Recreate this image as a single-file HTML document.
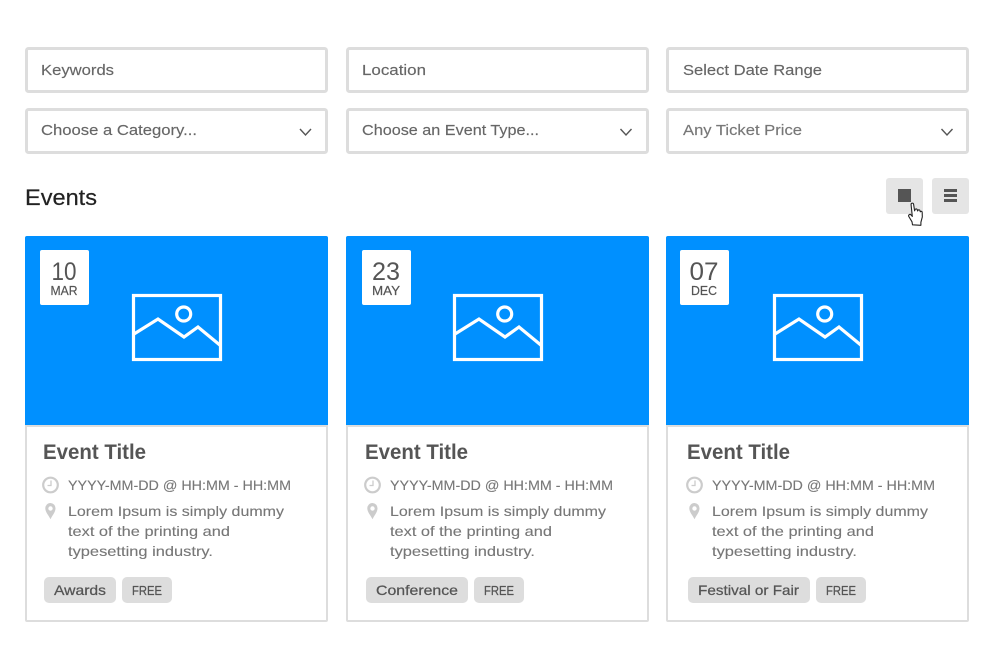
<!DOCTYPE html>
<html lang="en">
<head>
<meta charset="utf-8">
<title>Events</title>
<style>
html,body{margin:0;padding:0;background:#fff;width:1000px;height:667px;overflow:hidden}
svg{display:block}
text{font-family:"Liberation Sans",sans-serif}
.f{font-size:15px;fill:#666;stroke:#666;stroke-width:.15}
.t{font-size:21px;font-weight:700;fill:#555}
.d{font-size:14px;fill:#777;stroke:#777;stroke-width:.12}
.g{font-size:14px;fill:#555;stroke:#555;stroke-width:.25}
.r{font-size:13px;fill:#555;stroke:#555;stroke-width:.25}
.i{fill:#fff;stroke:#ddd;stroke-width:3}
.c{fill:none;stroke:#555;stroke-width:1.400}
.w{fill:none;stroke:#fff;stroke-width:3.200}
</style>
</head>
<body>
<svg width="1000" height="667" viewBox="0 0 1000 667" xmlns="http://www.w3.org/2000/svg">
<rect width="1000" height="667" fill="#fff"/>

<rect class="i" x="26.500" y="48.500" width="300" height="43" rx="2"/>
<rect class="i" x="347.500" y="48.500" width="300" height="43" rx="2"/>
<rect class="i" x="667.500" y="48.500" width="300" height="43" rx="2"/>
<rect class="i" x="26.500" y="109.500" width="300" height="43" rx="2"/>
<rect class="i" x="347.500" y="109.500" width="300" height="43" rx="2"/>
<rect class="i" x="667.500" y="109.500" width="300" height="43" rx="2"/>

<text class="f" x="41" y="75" textLength="73" lengthAdjust="spacingAndGlyphs">Keywords</text>
<text class="f" x="362" y="75" textLength="64" lengthAdjust="spacingAndGlyphs">Location</text>
<text class="f" x="683" y="75" textLength="139" lengthAdjust="spacingAndGlyphs">Select Date Range</text>
<text class="f" x="41" y="135" textLength="156" lengthAdjust="spacingAndGlyphs">Choose a Category...</text>
<text class="f" x="362" y="135" textLength="177" lengthAdjust="spacingAndGlyphs">Choose an Event Type...</text>
<text class="f" x="683" y="135" textLength="119" lengthAdjust="spacingAndGlyphs" style="fill:#777;stroke:#777">Any Ticket Price</text>

<path class="c" d="M300 129l5.500 6 5.500-6"/>
<path class="c" d="M620.500 129l5.500 6 5.500-6"/>
<path class="c" d="M941.500 129l5.500 6 5.500-6"/>

<text x="25" y="205" font-size="22" fill="#222" stroke="#222" stroke-width=".2" textLength="72" lengthAdjust="spacingAndGlyphs">Events</text>

<rect x="886" y="178" width="37" height="36" rx="3" fill="#e5e5e5"/>
<rect x="932" y="178" width="37" height="36" rx="3" fill="#e5e5e5"/>
<rect x="898" y="189" width="13" height="13" fill="#555"/>
<path d="M944 189h13v3h-13zM944 194h13v3h-13zM944 199h13v3h-13z" fill="#555"/>
<path d="M912.500 224.800l-.5-3-3.200-5.300c-.8-1.600 1.100-2.800 2.200-1.600l1.300 1.500-1.200-11.700c-.2-1.800 2.100-2.200 2.500-.4l1 6.500.4-1c.3-1.300 2.200-1.100 2.300.2l.3 1 .3-.5c.4-1.100 2-.9 2.100.3l.3 1c.4-.9 1.900-.6 1.900.6l.1 4.600-1.400 5.300v3z" fill="#fff" stroke="#222" stroke-width="1.100" stroke-linejoin="round"/>

<!-- Card 1 -->
<rect x="26" y="237" width="301" height="384" rx="1" fill="#fff" stroke="#ddd" stroke-width="2"/>
<path d="M25 425V238a2 2 0 0 1 2-2h299a2 2 0 0 1 2 2v187z" fill="#0090ff"/>
<rect x="25" y="425" width="303" height="2" fill="#ddd"/>
<rect x="40" y="250" width="49" height="55" rx="2" fill="#fff"/>
<text x="64" y="280" font-size="25" fill="#555" text-anchor="middle" textLength="25" lengthAdjust="spacingAndGlyphs">10</text>
<text x="64" y="295" font-size="12.500" fill="#555" stroke="#555" stroke-width=".2" text-anchor="middle" textLength="27" lengthAdjust="spacingAndGlyphs">MAR</text>
<rect class="w" x="133.500" y="295.500" width="87" height="64"/>
<circle class="w" cx="183.700" cy="314" r="7"/>
<path class="w" d="M134 334l24-15 26 18 14-10 23 19"/>
<text class="t" x="43" y="459" textLength="103" lengthAdjust="spacingAndGlyphs">Event Title</text>
<circle cx="50.500" cy="485" r="7.300" fill="none" stroke="#ccc" stroke-width="2.200"/>
<path d="M51 480.500v5h-3.500" fill="none" stroke="#ccc" stroke-width="1.300"/>
<path d="M50.500 503a5.200 5.200 0 0 0-5.200 5.400c0 3.700 3.500 7.200 5.200 10.800 1.700-3.600 5-7.100 5-10.800a5.200 5.200 0 0 0-5-5.400zm0 3.300a2.200 2.200 0 1 1 0 4.400 2.200 2.200 0 0 1 0-4.400z" fill="#ccc" fill-rule="evenodd"/>
<text class="d" x="68" y="490" textLength="223" lengthAdjust="spacingAndGlyphs">YYYY-MM-DD @ HH:MM - HH:MM</text>
<text class="d" x="68" y="516" textLength="216" lengthAdjust="spacingAndGlyphs">Lorem Ipsum is simply dummy</text>
<text class="d" x="68" y="536" textLength="162" lengthAdjust="spacingAndGlyphs">text of the printing and</text>
<text class="d" x="68" y="556" textLength="145" lengthAdjust="spacingAndGlyphs">typesetting industry.</text>
<rect x="44" y="577" width="72" height="26" rx="5" fill="#ddd"/>
<rect x="122" y="577" width="50" height="26" rx="5" fill="#ddd"/>
<text class="g" x="54" y="595" textLength="52" lengthAdjust="spacingAndGlyphs">Awards</text>
<text class="r" x="132" y="595" textLength="30" lengthAdjust="spacingAndGlyphs">FREE</text>

<!-- Card 2 -->
<rect x="347" y="237" width="301" height="384" rx="1" fill="#fff" stroke="#ddd" stroke-width="2"/>
<path d="M346 425V238a2 2 0 0 1 2-2h299a2 2 0 0 1 2 2v187z" fill="#0090ff"/>
<rect x="346" y="425" width="303" height="2" fill="#ddd"/>
<rect x="362" y="250" width="49" height="55" rx="2" fill="#fff"/>
<text x="386" y="280" font-size="25" fill="#555" text-anchor="middle" textLength="28" lengthAdjust="spacingAndGlyphs">23</text>
<text x="386" y="295" font-size="12.500" fill="#555" stroke="#555" stroke-width=".2" text-anchor="middle" textLength="28" lengthAdjust="spacingAndGlyphs">MAY</text>
<rect class="w" x="454.500" y="295.500" width="87" height="64"/>
<circle class="w" cx="504.700" cy="314" r="7"/>
<path class="w" d="M455 334l24-15 26 18 14-10 23 19"/>
<text class="t" x="365" y="459" textLength="103" lengthAdjust="spacingAndGlyphs">Event Title</text>
<circle cx="372.500" cy="485" r="7.300" fill="none" stroke="#ccc" stroke-width="2.200"/>
<path d="M373 480.500v5h-3.500" fill="none" stroke="#ccc" stroke-width="1.300"/>
<path d="M372.500 503a5.200 5.200 0 0 0-5.200 5.400c0 3.700 3.500 7.200 5.200 10.800 1.700-3.600 5-7.100 5-10.800a5.200 5.200 0 0 0-5-5.400zm0 3.300a2.200 2.200 0 1 1 0 4.400 2.200 2.200 0 0 1 0-4.400z" fill="#ccc" fill-rule="evenodd"/>
<text class="d" x="390" y="490" textLength="223" lengthAdjust="spacingAndGlyphs">YYYY-MM-DD @ HH:MM - HH:MM</text>
<text class="d" x="390" y="516" textLength="216" lengthAdjust="spacingAndGlyphs">Lorem Ipsum is simply dummy</text>
<text class="d" x="390" y="536" textLength="162" lengthAdjust="spacingAndGlyphs">text of the printing and</text>
<text class="d" x="390" y="556" textLength="145" lengthAdjust="spacingAndGlyphs">typesetting industry.</text>
<rect x="366" y="577" width="102" height="26" rx="5" fill="#ddd"/>
<rect x="474" y="577" width="50" height="26" rx="5" fill="#ddd"/>
<text class="g" x="376" y="595" textLength="82" lengthAdjust="spacingAndGlyphs">Conference</text>
<text class="r" x="484" y="595" textLength="30" lengthAdjust="spacingAndGlyphs">FREE</text>

<!-- Card 3 -->
<rect x="667" y="237" width="301" height="384" rx="1" fill="#fff" stroke="#ddd" stroke-width="2"/>
<path d="M666 425V238a2 2 0 0 1 2-2h299a2 2 0 0 1 2 2v187z" fill="#0090ff"/>
<rect x="666" y="425" width="303" height="2" fill="#ddd"/>
<rect x="680" y="250" width="49" height="55" rx="2" fill="#fff"/>
<text x="704" y="280" font-size="25" fill="#555" text-anchor="middle" textLength="29" lengthAdjust="spacingAndGlyphs">07</text>
<text x="704" y="295" font-size="12.500" fill="#555" stroke="#555" stroke-width=".2" text-anchor="middle" textLength="26" lengthAdjust="spacingAndGlyphs">DEC</text>
<rect class="w" x="774.500" y="295.500" width="87" height="64"/>
<circle class="w" cx="824.700" cy="314" r="7"/>
<path class="w" d="M775 334l24-15 26 18 14-10 23 19"/>
<text class="t" x="687" y="459" textLength="103" lengthAdjust="spacingAndGlyphs">Event Title</text>
<circle cx="694.500" cy="485" r="7.300" fill="none" stroke="#ccc" stroke-width="2.200"/>
<path d="M695 480.500v5h-3.500" fill="none" stroke="#ccc" stroke-width="1.300"/>
<path d="M694.500 503a5.200 5.200 0 0 0-5.200 5.400c0 3.700 3.500 7.200 5.200 10.800 1.700-3.600 5-7.100 5-10.800a5.200 5.200 0 0 0-5-5.400zm0 3.300a2.200 2.200 0 1 1 0 4.400 2.200 2.200 0 0 1 0-4.400z" fill="#ccc" fill-rule="evenodd"/>
<text class="d" x="712" y="490" textLength="223" lengthAdjust="spacingAndGlyphs">YYYY-MM-DD @ HH:MM - HH:MM</text>
<text class="d" x="712" y="516" textLength="216" lengthAdjust="spacingAndGlyphs">Lorem Ipsum is simply dummy</text>
<text class="d" x="712" y="536" textLength="162" lengthAdjust="spacingAndGlyphs">text of the printing and</text>
<text class="d" x="712" y="556" textLength="145" lengthAdjust="spacingAndGlyphs">typesetting industry.</text>
<rect x="688" y="577" width="122" height="26" rx="5" fill="#ddd"/>
<rect x="816" y="577" width="50" height="26" rx="5" fill="#ddd"/>
<text class="g" x="698" y="595" textLength="101" lengthAdjust="spacingAndGlyphs">Festival or Fair</text>
<text class="r" x="826" y="595" textLength="30" lengthAdjust="spacingAndGlyphs">FREE</text>
</svg>
</body>
</html>
